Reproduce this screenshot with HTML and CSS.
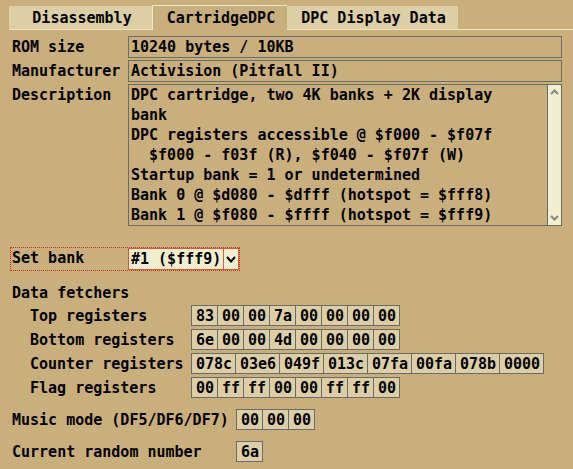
FILE: index.html
```html
<!DOCTYPE html>
<html>
<head>
<meta charset="utf-8">
<link rel="stylesheet" href="styles.css">
</head>
<body>
<div class="tabs">
  <div class="tab tab-dis">Disassembly</div>
  <div class="tab active">CartridgeDPC</div>
  <div class="tab tab-dpc">DPC Display Data</div>
</div>
<div class="panel">
  <div class="form">
    <div class="frow">
      <span class="flabel">ROM size</span>
      <div class="field">10240 bytes / 10KB</div>
    </div>
    <div class="frow">
      <span class="flabel">Manufacturer</span>
      <div class="field">Activision (Pitfall II)</div>
    </div>
    <div class="frow top">
      <span class="flabel">Description</span>
      <div class="field desc">
        <div class="desc-text">DPC cartridge, two 4K banks + 2K display
bank
DPC registers accessible @ $f000 - $f07f
  $f000 - f03f (R), $f040 - $f07f (W)
Startup bank = 1 or undetermined
Bank 0 @ $d080 - $dfff (hotspot = $fff8)
Bank 1 @ $f080 - $ffff (hotspot = $fff9)</div>
        <div class="scrollbar">
          <svg class="sarrow" width="13" height="8" viewBox="0 0 13 8"><polyline points="3,6 6.5,2.5 10,6" fill="none" stroke="#868686" stroke-width="2"/></svg>
          <svg class="sarrow" width="13" height="8" viewBox="0 0 13 8"><polyline points="3,2 6.5,5.5 10,2" fill="none" stroke="#868686" stroke-width="2"/></svg>
        </div>
      </div>
    </div>
  </div>

  <div class="setbank">
    <span class="sblabel">Set bank</span>
    <div class="dropdown">
      <span class="ddtext">#1 ($fff9)</span>
      <span class="ddarrow"><svg width="14" height="20" viewBox="0 0 14 20"><polyline points="3,8 7,12.5 11,8" fill="none" stroke="#000" stroke-width="2"/></svg></span>
    </div>
  </div>

  <div class="section">Data fetchers</div>

  <div class="regs">
    <div class="rrow">
      <span class="rlabel">Top registers</span>
      <div class="cells">
        <span class="cell">83</span><span class="cell">00</span><span class="cell">00</span><span class="cell">7a</span><span class="cell">00</span><span class="cell">00</span><span class="cell">00</span><span class="cell">00</span>
      </div>
    </div>
    <div class="rrow">
      <span class="rlabel">Bottom registers</span>
      <div class="cells">
        <span class="cell">6e</span><span class="cell">00</span><span class="cell">00</span><span class="cell">4d</span><span class="cell">00</span><span class="cell">00</span><span class="cell">00</span><span class="cell">00</span>
      </div>
    </div>
    <div class="rrow">
      <span class="rlabel">Counter registers</span>
      <div class="cells">
        <span class="cell w4">078c</span><span class="cell w4">03e6</span><span class="cell w4">049f</span><span class="cell w4">013c</span><span class="cell w4">07fa</span><span class="cell w4">00fa</span><span class="cell w4">078b</span><span class="cell w4">0000</span>
      </div>
    </div>
    <div class="rrow">
      <span class="rlabel">Flag registers</span>
      <div class="cells">
        <span class="cell">00</span><span class="cell">ff</span><span class="cell">ff</span><span class="cell">00</span><span class="cell">00</span><span class="cell">ff</span><span class="cell">ff</span><span class="cell">00</span>
      </div>
    </div>
  </div>

  <div class="mrow music">
    <span class="mlabel">Music mode (DF5/DF6/DF7)</span>
    <div class="cells">
      <span class="cell">00</span><span class="cell">00</span><span class="cell">00</span>
    </div>
  </div>
  <div class="mrow random">
    <span class="mlabel">Current random number</span>
    <div class="cells">
      <span class="cell">6a</span>
    </div>
  </div>
</div>
</body>
</html>
```
FILE: styles.css
```css
* { box-sizing: border-box; }
html, body {
  margin: 0;
  padding: 0;
  background: #c9af7c;
}
body {
  width: 573px;
  height: 469px;
  overflow: hidden;
  font-family: "DejaVu Sans Mono", "Liberation Mono", monospace;
  font-weight: bold;
  font-size: 15px;
  color: #000;
  line-height: 20px;
}

/* Tabs */
.tabs {
  display: flex;
  align-items: flex-end;
  height: 30px;
  margin-left: 9px;
  border-bottom: 1px solid #efe6c4;
}
.tab {
  height: 23px;
  background: #dccfa5;
  line-height: 20px;
  padding-top: 2px;
  text-align: center;
}
.tab-dis { width: 143px; padding-left: 3px; }
.tab-dpc { width: 171px; padding-left: 2px; }
.tab.active {
  width: 135px;
  height: 25px;
  margin-bottom: -1px;
  background: #c9af7c;
  border-top: 1px solid #efe6c4;
  border-left: 1px solid #efe6c4;
  padding-top: 2px;
  padding-left: 2px;
}

/* Panel */
.panel {
  padding-left: 12px;
}
.form {
  display: flex;
  flex-direction: column;
  gap: 2px;
  margin-top: 6px;
}
.frow {
  display: flex;
  align-items: flex-start;
}
.flabel {
  width: 116px;
  padding-top: 1px;
  line-height: 20px;
}
.field {
  width: 434px;
  height: 22px;
  border: 1px solid #6b6b6b;
  padding: 0 2px 0 2px;
  line-height: 20px;
  white-space: pre;
  overflow: hidden;
}
.field.desc {
  height: 142px;
  display: flex;
  padding: 0;
}
.desc-text {
  flex: 1;
  padding: 0 2px 0 2px;
  white-space: pre;
  overflow: hidden;
}
.scrollbar {
  width: 14px;
  border-left: 1px solid #6b6b6b;
  background: #f0efcf;
  display: flex;
  flex-direction: column;
  justify-content: space-between;
  padding: 3px 0 3px 0;
}
.sarrow { display: block; }

/* Set bank */
.setbank {
  display: flex;
  width: 230px;
  height: 24px;
  margin-top: 21px;
  margin-left: -2px;
  border: 1px dotted #d02a14;
  padding-left: 1px;
}
.sblabel {
  width: 116px;
  padding-top: 0;
}
.dropdown {
  display: flex;
  width: 111px;
  height: 22px;
  border: 1px solid #e0583a;
  background: #f0efcf;
}
.ddtext {
  width: 95px;
  padding-left: 2px;
  line-height: 20px;
  border-right: 1px solid #e0583a;
}
.ddarrow {
  width: 14px;
  display: flex;
}
.ddarrow svg { display: block; }

/* Data fetchers */
.section {
  margin-top: 12px;
  line-height: 20px;
}
.regs {
  display: flex;
  flex-direction: column;
  gap: 3px;
  margin-top: 2px;
}
.rrow {
  display: flex;
}
.rlabel {
  width: 161px;
  margin-left: 18px;
  padding-top: 2px;
  line-height: 19px;
}
.cells {
  display: flex;
  border-left: 1px solid #6b6b6b;
  height: 21px;
}
.cell {
  width: 26px;
  height: 21px;
  border-top: 1px solid #6b6b6b;
  border-bottom: 1px solid #6b6b6b;
  border-right: 1px solid #6b6b6b;
  background: #dccfa5;
  text-align: center;
  line-height: 19px;
  padding-top: 1px;
  padding-left: 1px;
  overflow: hidden;
}
.cell.w4 { width: 44px; }

.mrow {
  display: flex;
  margin-top: 11px;
}
.mlabel {
  width: 224px;
  padding-top: 2px;
  line-height: 19px;
}
```
